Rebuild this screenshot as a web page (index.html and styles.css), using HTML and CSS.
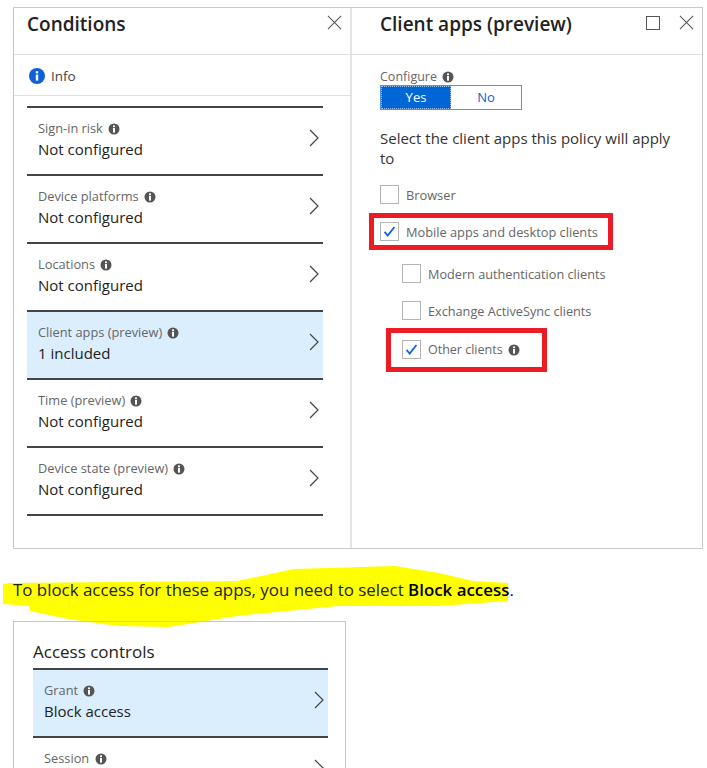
FILE: index.html
```html
<!DOCTYPE html>
<html lang="en">
<head>
    <meta charset="UTF-8">
    <meta name="viewport" content="width=device-width, initial-scale=1.0">
    <title>Client apps - Block access</title>
    <link rel="stylesheet" href="styles.css">
</head>
<body>
    <svg width="0" height="0" class="defs">
        <symbol id="tip" viewBox="0 0 12 12">
            <circle cx="6" cy="6" r="5.5" fill="currentColor"/>
            <rect x="5" y="5" width="2" height="4.6" fill="#fff"/>
            <rect x="5" y="2.4" width="2" height="1.8" fill="#fff"/>
        </symbol>
        <symbol id="chevron" viewBox="0 0 10 18">
            <path d="M1 1l8 8-8 8" fill="none" stroke="#444" stroke-width="1.2"/>
        </symbol>
        <symbol id="close" viewBox="0 0 16 16">
            <path d="M1 1l14 14M15 1L1 15" fill="none" stroke="#555" stroke-width="1.1"/>
        </symbol>
        <symbol id="tick" viewBox="0 0 19 19">
            <path d="M4 10l3.5 4L15 4.5" fill="none" stroke="#0f62d6" stroke-width="2"/>
        </symbol>
    </svg>

    <div class="frame">
        <div class="blade blade-left">
            <div class="blade-head">
                <h2>Conditions</h2>
                <svg class="close"><use href="#close"/></svg>
            </div>
            <div class="info-bar">
                <svg class="info-icon" viewBox="0 0 16 16">
                    <circle cx="8" cy="8" r="8" fill="#0f62d6"/>
                    <rect x="6.8" y="6.6" width="2.4" height="6" fill="#fff"/>
                    <rect x="6.8" y="3.2" width="2.4" height="2.2" fill="#fff"/>
                </svg>
                <span>Info</span>
            </div>
            <div class="rows">
                <div class="row">
                    <div>
                        <div class="row-label">Sign-in risk <svg class="tip"><use href="#tip"/></svg></div>
                        <div class="row-value">Not configured</div>
                    </div>
                    <svg class="chevron"><use href="#chevron"/></svg>
                </div>
                <div class="row">
                    <div>
                        <div class="row-label">Device platforms <svg class="tip"><use href="#tip"/></svg></div>
                        <div class="row-value">Not configured</div>
                    </div>
                    <svg class="chevron"><use href="#chevron"/></svg>
                </div>
                <div class="row">
                    <div>
                        <div class="row-label">Locations <svg class="tip"><use href="#tip"/></svg></div>
                        <div class="row-value">Not configured</div>
                    </div>
                    <svg class="chevron"><use href="#chevron"/></svg>
                </div>
                <div class="row selected">
                    <div>
                        <div class="row-label">Client apps (preview) <svg class="tip"><use href="#tip"/></svg></div>
                        <div class="row-value">1 included</div>
                    </div>
                    <svg class="chevron"><use href="#chevron"/></svg>
                </div>
                <div class="row">
                    <div>
                        <div class="row-label">Time (preview) <svg class="tip"><use href="#tip"/></svg></div>
                        <div class="row-value">Not configured</div>
                    </div>
                    <svg class="chevron"><use href="#chevron"/></svg>
                </div>
                <div class="row last">
                    <div>
                        <div class="row-label">Device state (preview) <svg class="tip"><use href="#tip"/></svg></div>
                        <div class="row-value">Not configured</div>
                    </div>
                    <svg class="chevron"><use href="#chevron"/></svg>
                </div>
            </div>
        </div>

        <div class="blade blade-right">
            <div class="blade-head">
                <h2>Client apps (preview)</h2>
                <div class="head-icons">
                    <span class="maximize"></span>
                    <svg class="close"><use href="#close"/></svg>
                </div>
            </div>
            <div class="config">
                <div class="config-label">Configure <svg class="tip"><use href="#tip"/></svg></div>
                <div class="toggle">
                    <span class="toggle-on">Yes</span>
                    <span class="toggle-off">No</span>
                </div>
                <p class="select-text">Select the client apps this policy will apply to</p>
                <div class="opt opt-browser"><span class="box"></span>Browser</div>
                <div class="opt opt-mobile marked">
                    <span class="box"><svg><use href="#tick"/></svg></span>Mobile apps and desktop clients
                </div>
                <div class="opt opt-modern"><span class="box"></span>Modern authentication clients</div>
                <div class="opt opt-exchange"><span class="box"></span>Exchange ActiveSync clients</div>
                <div class="opt opt-other marked">
                    <span class="box"><svg><use href="#tick"/></svg></span>Other clients <svg class="tip"><use href="#tip"/></svg>
                </div>
            </div>
        </div>
    </div>

    <div class="note">
        <svg class="marker" viewBox="0 0 520 70">
            <path d="M3 19L10 18L120 17L237 16L294 4L395 1L439 8L473 16L508 18L508 36L439 41L338 41L237 51L169 62L118 61L68 54L30 46L29 41L3 39Z" fill="#ffff00"/>
        </svg>
        <p>To block access for these apps, you need to select <b>Block access</b>.</p>
    </div>

    <div class="access">
        <h3>Access controls</h3>
        <div class="row selected">
            <div>
                <div class="row-label">Grant <svg class="tip"><use href="#tip"/></svg></div>
                <div class="row-value">Block access</div>
            </div>
            <svg class="chevron"><use href="#chevron"/></svg>
        </div>
        <div class="row">
            <div>
                <div class="row-label">Session <svg class="tip"><use href="#tip"/></svg></div>
                <div class="row-value">&nbsp;</div>
            </div>
            <svg class="chevron"><use href="#chevron"/></svg>
        </div>
    </div>
</body>
</html>
```

FILE: styles.css
```css
html, body {
    height: 768px;
    overflow: hidden;
}
body {
    margin: 0;
    background-color: #fff;
    color: #222;
    font-family: 'Open Sans', 'Noto Sans', sans-serif;
}
.defs {
    display: block;
    height: 0;
}
.frame {
    display: flex;
    width: 690px;
    height: 542px;
    margin: 7px 0 0 13px;
    box-sizing: border-box;
    border: 1px solid #c8c8c8;
}
.blade-left {
    width: 338px;
    flex: none;
    border-right: 2px solid #e4e4e4;
    box-sizing: border-box;
}
.blade-right {
    flex: 1;
}
.blade-head {
    display: flex;
    justify-content: space-between;
    height: 46px;
    padding: 0 8px 0 13px;
    border-bottom: 1px solid #e0e0e0;
}
.blade-right .blade-head {
    padding: 0 8px 0 28px;
}
.blade-head h2 {
    margin: 3px 0 0;
    font-size: 19px;
    font-weight: 600;
    line-height: 26px;
    color: #222;
}
.head-icons {
    display: flex;
    gap: 19px;
}
.close {
    width: 15px;
    height: 15px;
    margin-top: 7px;
}
.maximize {
    width: 12px;
    height: 12px;
    margin-top: 8px;
    border: 1px solid #555;
}
.info-bar {
    display: flex;
    align-items: center;
    gap: 6px;
    height: 39px;
    padding: 1px 0 0 15px;
    border-bottom: 1px solid #e0e0e0;
    font-size: 13.5px;
    color: #444;
}
.info-icon {
    width: 16px;
    height: 16px;
}
.rows {
    margin: 10px 27px 0 13px;
}
.row {
    display: flex;
    justify-content: space-between;
    align-items: center;
    height: 68px;
    box-sizing: border-box;
    padding: 0 4px 4px 11px;
    border-top: 2px solid #444;
}
.row.last {
    height: 70px;
    border-bottom: 2px solid #444;
}
.row.selected {
    background-color: #dbeefd;
}
.row-label {
    font-size: 12.8px;
    line-height: 18px;
    color: #666;
}
.row-value {
    margin-top: 2px;
    font-size: 15px;
    line-height: 20px;
    color: #222;
}
.tip {
    width: 12px;
    height: 12px;
    margin-left: 2px;
    vertical-align: -2px;
    color: #555;
}
.chevron {
    width: 10px;
    height: 18px;
    margin-bottom: 2px;
}
.config {
    padding: 14px 0 0 28px;
}
.config-label {
    font-size: 12.5px;
    line-height: 16px;
    color: #666;
}
.toggle {
    display: flex;
    width: 142px;
    height: 25px;
    box-sizing: border-box;
    border: 1px solid #4f94e8;
    font-size: 13px;
    line-height: 23px;
    text-align: center;
}
.toggle-on {
    width: 70px;
    box-sizing: border-box;
    border: 1px dotted #9cc4f2;
    line-height: 21px;
    background-color: #0066d6;
    color: #fff;
}
.toggle-off {
    flex: 1;
    color: #0066d6;
}
.select-text {
    width: 300px;
    margin: 18px 0 0;
    font-size: 15px;
    line-height: 20px;
    color: #333;
}
.opt {
    display: flex;
    align-items: center;
    width: fit-content;
    font-size: 12.8px;
    color: #666;
}
.box {
    width: 19px;
    height: 19px;
    flex: none;
    box-sizing: border-box;
    margin-right: 7px;
    border: 1px solid #b4b4b4;
}
.box svg {
    display: block;
    width: 17px;
    height: 17px;
}
.opt-browser {
    margin-top: 17px;
}
.opt-mobile {
    margin: 14px 0 0 -6px;
    padding: 4px 10px 4px 6px;
}
.opt-modern {
    margin: 19px 0 0 22px;
    font-size: 12.7px;
}
.opt-exchange {
    margin: 18px 0 0 22px;
    font-size: 12.7px;
}
.opt-other {
    margin: 13px 0 0 11px;
    padding: 7px 22px 8px 11px;
    font-size: 12.5px;
}
.opt-other .tip {
    margin-left: 5px;
}
.marked {
    outline: 5px solid #ed1c24;
}
.note {
    position: relative;
    height: 72px;
}
.note p {
    position: relative;
    margin: 0;
    padding-top: 31px;
    padding-left: 13px;
    font-size: 16.9px;
    line-height: 20px;
    color: #222;
}
.note b {
    font-weight: 600;
    color: #000;
}
.marker {
    position: absolute;
    left: 0;
    top: 16px;
    width: 520px;
    height: 70px;
}
.access {
    position: relative;
    width: 333px;
    box-sizing: border-box;
    margin-left: 13px;
    padding: 18px 17px 0 19px;
    border: 1px solid #c8c8c8;
}
.access h3 {
    margin: 0 0 4px;
    font-size: 17px;
    font-weight: 400;
    line-height: 24px;
    color: #222;
}
```
